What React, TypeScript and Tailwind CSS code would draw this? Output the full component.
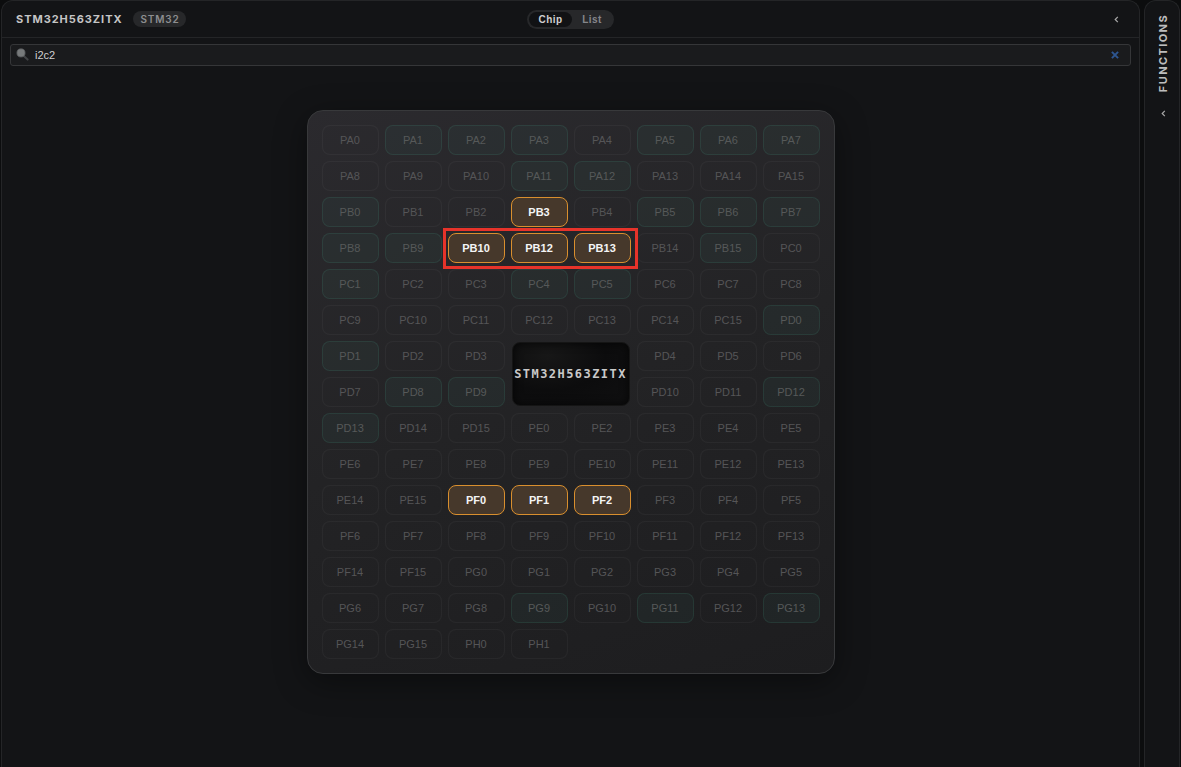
import React, { useState } from 'react';

const ROWS = [
  'PA0 PA1* PA2* PA3* PA4 PA5* PA6* PA7*',
  'PA8 PA9 PA10 PA11* PA12* PA13 PA14 PA15',
  'PB0* PB1 PB2 PB3! PB4 PB5* PB6* PB7*',
  'PB8* PB9* PB10! PB12! PB13! PB14 PB15* PC0',
  'PC1* PC2 PC3 PC4* PC5* PC6 PC7 PC8',
  'PC9 PC10 PC11 PC12 PC13 PC14 PC15 PD0*',
  'PD1* PD2 PD3 PD4 PD5 PD6',
  'PD7 PD8* PD9* PD10 PD11 PD12*',
  'PD13* PD14 PD15 PE0 PE2 PE3 PE4 PE5',
  'PE6 PE7 PE8 PE9 PE10 PE11 PE12 PE13',
  'PE14 PE15 PF0! PF1! PF2! PF3 PF4 PF5',
  'PF6 PF7 PF8 PF9 PF10 PF11 PF12 PF13',
  'PF14 PF15 PG0 PG1 PG2 PG3 PG4 PG5',
  'PG6 PG7 PG8 PG9* PG10 PG11* PG12 PG13*',
  'PG14 PG15 PH0 PH1',
];

// "*" marks an assigned pin, "!" a pin that matches the search
const pins = ROWS.join(' ')
  .split(' ')
  .map((raw) => ({
    name: raw.replace(/[*!]/, ''),
    state: raw.endsWith('!') ? 'match' : raw.endsWith('*') ? 'used' : 'idle',
  }));

const pinStyles: Record<string, string> = {
  idle: 'border-white/[0.035] bg-white/[0.005] text-[#555557]',
  used: 'border-[#50c8a0]/[0.11] bg-[#50b89a]/[0.05] text-[#565959]',
  match: 'border-[#d98f2e] bg-[#46382b] font-bold text-[#f4f4f4]',
};

const Chevron: React.FC = () => (
  <svg width="5" height="7" viewBox="0 0 5 7" fill="none" stroke="#a8a8a8" strokeWidth="1.2">
    <path d="M3.8 0.8 1.2 3.5 3.8 6.2" />
  </svg>
);

const App: React.FC = () => {
  const [view, setView] = useState('Chip');
  const [query, setQuery] = useState('i2c2');

  return (
    <div className="flex h-[767px] w-[1181px] gap-1 overflow-hidden bg-[#0c0d0e] pl-px font-['Inter',sans-serif]">
      <main className="flex w-[1139px] flex-col rounded-t-[12px] border-x border-t border-[#242527] bg-[#131416]">
        <header className="grid h-[37px] shrink-0 grid-cols-[1fr_87px_1fr] items-center border-b border-[#242527] pr-[20px] pl-[14px]">
          <div className="flex items-center gap-[10px]">
            <h1 className="text-[11px] font-bold tracking-[0.95px] text-[#c5c5c5]">STM32H563ZITX</h1>
            <span className="flex h-4 items-center rounded-full bg-[#27282a] pr-[7px] pl-2 text-[10px] font-semibold tracking-[0.8px] text-[#8d8e90]">
              STM32
            </span>
          </div>
          <div className="relative left-[3px] flex h-[19px] w-[87px] items-center rounded-full bg-[#27282a] p-[2px] font-['Liberation_Sans',sans-serif] text-[10px] font-bold tracking-[0.4px]">
            {['Chip', 'List'].map((name) => (
              <button
                key={name}
                onClick={() => setView(name)}
                className={`h-[15px] rounded-full leading-[15px] ${
                  view === name ? 'w-[43px] bg-[#111214] text-[#cfcfcf]' : 'flex-1 text-[#85868a]'
                }`}
              >
                {name}
              </button>
            ))}
          </div>
          <button className="justify-self-end" aria-label="Collapse">
            <Chevron />
          </button>
        </header>

        <div className="mx-2 mt-[6px] flex h-[22px] shrink-0 items-center rounded-[3px] border border-[#353638] bg-[#1a1b1d] pr-[11px] pl-[5px]">
          <svg width="13" height="13" viewBox="0 0 13 13" className="mb-px">
            <path d="m7.8 8 3.8 3.6" stroke="#414345" strokeWidth="2" strokeLinecap="round" />
            <circle cx="5" cy="4.9" r="4.1" fill="#777a7b" stroke="#55585a" strokeWidth="0.8" />
          </svg>
          <input
            value={query}
            onChange={(e) => setQuery(e.target.value)}
            className="ml-[6px] min-w-0 flex-1 bg-transparent font-['Liberation_Sans',sans-serif] text-[11px] text-[#d0d0d0] outline-none"
          />
          <button onClick={() => setQuery('')} aria-label="Clear">
            <svg width="8" height="8" viewBox="0 0 8 8" stroke="#2d5590" strokeWidth="2">
              <path d="m0.9 0.9 6.2 6.2M7.1 0.9.9 7.1" />
            </svg>
          </button>
        </div>

        <div className="flex justify-center pt-[44px]">
          <div className="relative grid w-[528px] auto-rows-[30px] grid-cols-8 gap-[6px] rounded-[16px] border border-[#38393b] bg-linear-[160deg,#2b2a2e,#232325_50%,#1d1d1f] p-[14px] font-['Liberation_Sans',sans-serif] shadow-[0_8px_32px_rgba(0,0,0,0.4)]">
            <div className="col-[4/6] row-[7/9] m-px flex items-center justify-center rounded-[8px] border border-[#151515] bg-radial-[at_30%_20%] from-[#171717] via-[#0c0c0d] to-[#101011] font-['DejaVu_Sans_Mono',monospace] text-[12px] font-bold tracking-[1.44px] whitespace-nowrap text-[#c9c9c9] shadow-[inset_0_0_10px_rgba(0,0,0,0.7)]">
              STM32H563ZITX
            </div>
            {pins.map((pin) => (
              <button
                key={pin.name}
                className={`rounded-[8px] border text-[11px] ${pinStyles[pin.state]}`}
              >
                {pin.name}
              </button>
            ))}
            {/* Highlighted group */}
            <div className="pointer-events-none absolute top-[117px] left-[135px] h-[41px] w-[195px] border-3 border-[#e6332a]" />
          </div>
        </div>
      </main>

      <aside className="flex w-[36px] flex-col items-center rounded-t-[12px] border-x border-t border-[#242527] bg-[#131416] pt-[13px] pl-[2px]">
        <span className="rotate-180 text-[11px] leading-4 font-bold tracking-[1.4px] text-[#bdbdbd] [writing-mode:vertical-rl]">
          FUNCTIONS
        </span>
        <button className="mt-[18px] ml-px" aria-label="Expand">
          <Chevron />
        </button>
      </aside>
    </div>
  );
};

export default App;
